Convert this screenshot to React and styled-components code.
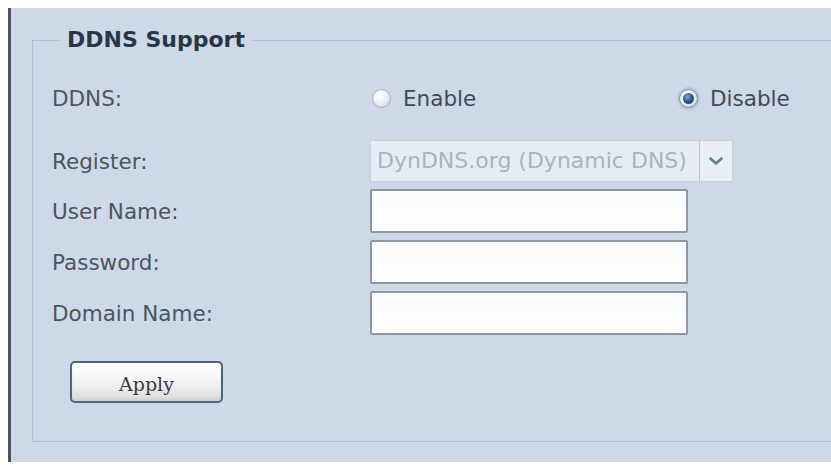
import React from 'react';
import styled, { createGlobalStyle } from 'styled-components';

const GlobalStyle = createGlobalStyle`
  html, body {
    background: #ffffff;
  }
  body {
    margin: 8px 0 0 8px;
    overflow: hidden;
    font-family: "DejaVu Sans", Verdana, sans-serif;
  }
`;

const Panel = styled.div`
  background: #cfd8e8;
  border-left: 3px solid #50545c;
  padding: 19px 0 20px 21px;
  overflow: hidden;
`;

const Group = styled.fieldset`
  margin: 0 -6px 0 0;
  padding: 23px 0 38px 19px;
  border: 1px solid #b3bfd0;
  min-width: 0;
`;

const Legend = styled.legend`
  margin-left: 8px;
  padding: 0 7px;
  font-size: 22px;
  line-height: 26px;
  font-weight: bold;
  color: #283746;
`;

const Rows = styled.div`
  display: flex;
  flex-direction: column;
  gap: 7px;
`;

const Row = styled.div`
  display: grid;
  grid-template-columns: 318px auto;
  align-items: center;
  height: ${props => props.$h}px;
  margin-bottom: ${props => props.$after || 0}px;
`;

const Label = styled.span`
  font-size: 21.5px;
  color: #4a5562;
  white-space: nowrap;
`;

const RadioGroup = styled.div`
  display: grid;
  grid-template-columns: 307px auto;
  align-items: center;
`;

const Option = styled.label`
  display: flex;
  align-items: center;
  gap: 12px;
  font-size: 21.5px;
  color: #3f4a57;
`;

const Dot = styled.span`
  box-sizing: border-box;
  width: 19px;
  height: 19px;
  margin-left: 2px;
  border-radius: 50%;
  border: 1px solid ${props => (props.$on ? '#7f8b99' : '#a8b0ba')};
  background: radial-gradient(circle at 40% 35%, #ffffff 0%, #eef0f3 45%, #c8ced5 100%);
  box-shadow: ${props => (props.$on ? '0 0 0 2px rgba(178, 196, 220, 0.8)' : 'none')};
  display: grid;
  place-items: center;

  &::after {
    content: '';
    display: ${props => (props.$on ? 'block' : 'none')};
    width: 11px;
    height: 11px;
    border-radius: 50%;
    background: radial-gradient(circle at 40% 35%, #7fa9d2 0%, #2a5f92 45%, #123a60 100%);
  }
`;

const Select = styled.div`
  box-sizing: border-box;
  display: flex;
  width: 363px;
  height: 42px;
  border: 1px solid #c6cfda;
  background: #e6ecf3;
`;

const SelectText = styled.span`
  flex: 1;
  padding-left: 6px;
  font-size: 22px;
  line-height: 40px;
  color: #aab3be;
  white-space: nowrap;
  overflow: hidden;
`;

const SelectArrow = styled.span`
  width: 32px;
  border-left: 1px solid #bcc5d0;
  background: #e9eef4;
  display: grid;
  place-items: center;
`;

const TextInput = styled.input`
  box-sizing: border-box;
  width: 318px;
  height: 44px;
  margin: 0;
  padding: 0 6px;
  border: 2px solid #8d98a4;
  border-radius: 2px;
  background: linear-gradient(#f9fafc, #ffffff);
  font: inherit;
  font-size: 20px;
  outline: none;
`;

const ApplyButton = styled.button`
  align-self: flex-start;
  width: 153px;
  height: 42px;
  margin: 19px 0 0 18px;
  padding: 3px 0 0;
  border: 2px solid #4d667e;
  border-radius: 5px;
  background: linear-gradient(#ffffff 0%, #f5f5f5 45%, #dcdcdc 100%);
  box-shadow: inset 0 -2px 3px rgba(0, 0, 0, 0.06);
  font-family: "DejaVu Serif", "Liberation Serif", serif;
  font-size: 19px;
  color: #383b40;
`;

const Chevron = () => (
  <svg width="14" height="9" viewBox="0 0 14 9">
    <path d="M1.5 1.5 L7 6.5 L12.5 1.5" fill="none" stroke="#5f7d9c" strokeWidth="2.6" strokeLinecap="round" strokeLinejoin="round" />
  </svg>
);

const fields = ['User Name:', 'Password:', 'Domain Name:'];

const App = () => {
  return (
    <>
      <GlobalStyle />
      <Panel>
        <Group>
          <Legend>DDNS Support</Legend>
          <Rows>
            <Row $h={44} $after={13}>
              <Label>DDNS:</Label>
              <RadioGroup>
                <Option>
                  <Dot />
                  Enable
                </Option>
                <Option>
                  <Dot $on />
                  Disable
                </Option>
              </RadioGroup>
            </Row>
            <Row $h={42}>
              <Label>Register:</Label>
              <Select>
                <SelectText>DynDNS.org (Dynamic DNS)</SelectText>
                <SelectArrow>
                  <Chevron />
                </SelectArrow>
              </Select>
            </Row>
            {fields.map(name => (
              <Row key={name} $h={44}>
                <Label>{name}</Label>
                <TextInput type={name === 'Password:' ? 'password' : 'text'} />
              </Row>
            ))}
            <ApplyButton>Apply</ApplyButton>
          </Rows>
        </Group>
      </Panel>
    </>
  );
};

export default App;
